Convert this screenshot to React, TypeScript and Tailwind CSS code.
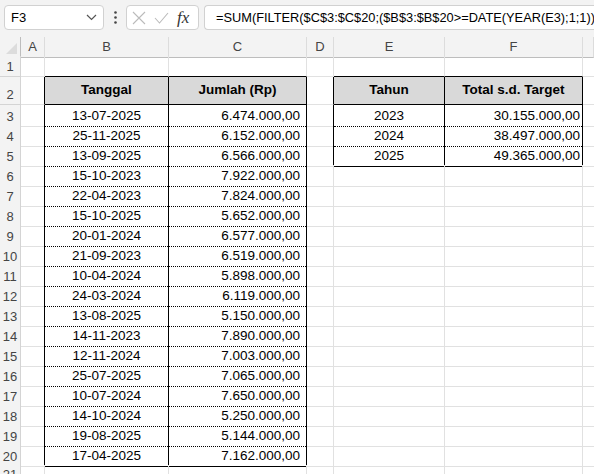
import React from "react";

const font = { fontFamily: '"Liberation Sans", Arial, sans-serif' };

const data: [string, string][] = [
  ["13-07-2025", "6.474.000,00"],
  ["25-11-2025", "6.152.000,00"],
  ["13-09-2025", "6.566.000,00"],
  ["15-10-2023", "7.922.000,00"],
  ["22-04-2023", "7.824.000,00"],
  ["15-10-2025", "5.652.000,00"],
  ["20-01-2024", "6.577.000,00"],
  ["21-09-2023", "6.519.000,00"],
  ["10-04-2024", "5.898.000,00"],
  ["24-03-2024", "6.119.000,00"],
  ["13-08-2025", "5.150.000,00"],
  ["14-11-2023", "7.890.000,00"],
  ["12-11-2024", "7.003.000,00"],
  ["25-07-2025", "7.065.000,00"],
  ["10-07-2024", "7.650.000,00"],
  ["14-10-2024", "5.250.000,00"],
  ["19-08-2025", "5.144.000,00"],
  ["17-04-2025", "7.162.000,00"],
];

const summary: [string, string][] = [
  ["2023", "30.155.000,00"],
  ["2024", "38.497.000,00"],
  ["2025", "49.365.000,00"],
];

const cols = "grid grid-cols-[21px_24px_124px_138px_27px_111px_138px_1fr]";

function RowHead({ n }: { n: number }) {
  return (
    <div className="bg-[#f3f3f3] border-r border-b border-[#d4d4d4] flex items-end justify-center text-[13px] text-[#444] leading-none pb-[3px]">
      {n}
    </div>
  );
}

function TCell({ children, last, align }: { children: React.ReactNode; last: boolean; align: "center" | "right" | "rightTight" }) {
  const al =
    align === "center" ? "justify-center" : align === "right" ? "justify-end pr-[6px]" : "justify-end pr-[2px]";
  return (
    <div className="border-r border-r-black flex flex-col">
      <div className={`flex-1 flex items-center ${al} text-[13.5px] pt-[1px]`}>{children}</div>
      <div className={last ? "h-px bg-black" : "h-0 border-b border-dotted border-black"} />
    </div>
  );
}

export default function App() {
  return (
    <div className="w-[594px] h-[474px] overflow-hidden bg-white text-black" style={font}>
      {/* Formula bar */}
      <div className="h-[37px] bg-[#f3f3f3] flex items-start pt-[5px] pl-[4px] gap-0">
        <div className="w-[100px] h-[25px] bg-white border border-[#d1d1d1] rounded-[4px] flex items-center justify-between pl-[6px] pr-[6px] text-[13px]">
          <span>F3</span>
          <svg width="11" height="7" viewBox="0 0 11 7" fill="none">
            <path d="M1 1l4.5 4.5L10 1" stroke="#555" strokeWidth="1.2" />
          </svg>
        </div>
        <div className="w-[22px] h-[25px] flex items-center justify-center">
          <svg width="3" height="13" viewBox="0 0 3 13">
            <circle cx="1.5" cy="1.5" r="1.3" fill="#444" />
            <circle cx="1.5" cy="6.5" r="1.3" fill="#444" />
            <circle cx="1.5" cy="11.5" r="1.3" fill="#444" />
          </svg>
        </div>
        <div className="w-[73px] h-[25px] bg-white border border-[#d1d1d1] rounded-[4px] flex items-center pl-[5px] gap-[8px]">
          <svg width="14" height="14" viewBox="0 0 14 14" fill="none">
            <path d="M1 1l12 12M13 1L1 13" stroke="#bbbbbb" strokeWidth="1.1" />
          </svg>
          <svg width="15" height="12" viewBox="0 0 15 12" fill="none">
            <path d="M1 6l4.5 5L14 1" stroke="#bbbbbb" strokeWidth="1.1" />
          </svg>
          <span className="text-[17px] italic leading-none text-[#333]" style={{ fontFamily: '"Liberation Serif", "Times New Roman", serif' }}>
            fx
          </span>
        </div>
        <div className="ml-[5px] flex-1 h-[25px] bg-white border border-[#d1d1d1] rounded-l-[4px] border-r-0 flex items-center pl-[11px] text-[12.8px] whitespace-nowrap overflow-hidden">
          =SUM(FILTER($C$3:$C$20;($B$3:$B$20&gt;=DATE(YEAR(E3);1;1))*(
        </div>
      </div>

      {/* Column headers */}
      <div className={`${cols} h-[19px]`}>
        <div className="bg-[#f3f3f3] border-r border-b border-[#bdbdbd] flex items-end justify-end pr-[3px] pb-[3px]">
          <svg width="11" height="11" viewBox="0 0 11 11">
            <path d="M11 0V11H0Z" fill="#dcdcdc" />
          </svg>
        </div>
        {["A", "B", "C", "D", "E", "F", ""].map((c, i) => (
          <div
            key={i}
            className="bg-[#f3f3f3] border-r border-b border-r-[#dcdcdc] border-b-[#bdbdbd] flex items-center justify-center text-[13px] text-[#444]"
          >
            {c}
          </div>
        ))}
      </div>

      {/* Row 1 */}
      <div className={`${cols} h-[21px]`}>
        <RowHead n={1} />
        <div className="border-r border-b border-[#e1e1e1]" />
        <div className="border-r border-r-[#e1e1e1] border-b border-b-black" />
        <div className="border-r border-r-[#e1e1e1] border-b border-b-black" />
        <div className="border-r border-b border-[#e1e1e1]" />
        <div className="border-r border-r-[#e1e1e1] border-b border-b-black" />
        <div className="border-r border-r-[#e1e1e1] border-b border-b-black" />
        <div className="border-b border-[#e1e1e1]" />
      </div>

      {/* Row 2 headers */}
      <div className={`${cols} h-[28px]`}>
        <RowHead n={2} />
        <div className="border-r border-r-black border-b border-b-[#e1e1e1]" />
        <div className="bg-[#d9d9d9] border-r border-b border-black flex items-center justify-center font-bold text-[13.5px]">
          Tanggal
        </div>
        <div className="bg-[#d9d9d9] border-r border-b border-black flex items-center justify-center font-bold text-[13.5px]">
          Jumlah (Rp)
        </div>
        <div className="border-r border-r-black border-b border-b-[#e1e1e1]" />
        <div className="bg-[#d9d9d9] border-r border-b border-black flex items-center justify-center font-bold text-[13.5px]">
          Tahun
        </div>
        <div className="bg-[#d9d9d9] border-r border-b border-black flex items-center justify-center font-bold text-[13.5px]">
          Total s.d. Target
        </div>
        <div className="border-b border-[#e1e1e1]" />
      </div>

      {/* Data rows */}
      {data.map(([d, v], i) => {
        const last = i === data.length - 1;
        const s = summary[i];
        const sLast = i === summary.length - 1;
        return (
          <div key={i} className={`${cols} h-[20px]`}>
            <RowHead n={i + 3} />
            <div className="border-r border-r-black border-b border-b-[#e1e1e1]" />
            <TCell last={last} align="center">{d}</TCell>
            <TCell last={last} align="right">{v}</TCell>
            {s ? (
              <>
                <div className="border-r border-r-black border-b border-b-[#e1e1e1]" />
                <TCell last={sLast} align="center">{s[0]}</TCell>
                <TCell last={sLast} align="rightTight">{s[1]}</TCell>
              </>
            ) : (
              <>
                <div className="border-r border-b border-[#e1e1e1]" />
                <div className="border-r border-b border-[#e1e1e1]" />
                <div className="border-r border-b border-[#e1e1e1]" />
              </>
            )}
            <div className="border-b border-[#e1e1e1]" />
          </div>
        );
      })}

      {/* Row 21 partial */}
      <div className={`${cols} h-[20px]`}>
        <RowHead n={21} />
        <div className="border-r border-b border-[#e1e1e1]" />
        <div className="border-r border-b border-[#e1e1e1]" />
        <div className="border-r border-b border-[#e1e1e1]" />
        <div className="border-r border-b border-[#e1e1e1]" />
        <div className="border-r border-b border-[#e1e1e1]" />
        <div className="border-r border-b border-[#e1e1e1]" />
        <div className="border-b border-[#e1e1e1]" />
      </div>
    </div>
  );
}
